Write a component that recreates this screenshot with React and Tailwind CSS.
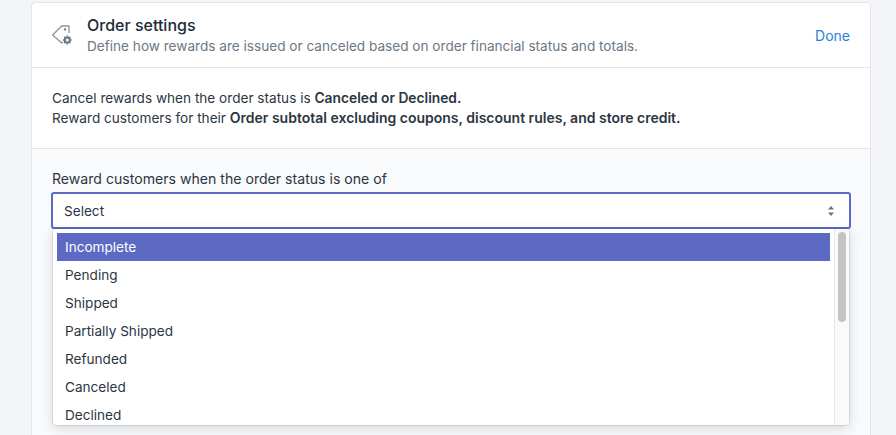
import React from 'react';

const statuses = ['Pending', 'Shipped', 'Partially Shipped', 'Refunded', 'Canceled', 'Declined'];

function TagGearIcon() {
  return (
    <svg width="22" height="22" viewBox="0 0 22 22" fill="none" className="mt-[21px] shrink-0 self-start">
      <path d="M18 9V2H10.7L1.6 11L10.7 19L12 17.8" stroke="#8a94a0" strokeWidth="1.3" strokeLinejoin="round" />
      <circle cx="14" cy="5.4" r="1.2" fill="#6d7885" />
      <circle cx="16.3" cy="16" r="2.5" stroke="#6d7885" strokeWidth="2" />
      <path d="M16.3 11.6v1.8M16.3 18.6v1.8M11.9 16h1.8M18.9 16h1.8M13.2 12.9l1.2 1.2M18.2 17.9l1.2 1.2M19.4 12.9l-1.2 1.2M14.4 17.9l-1.2 1.2" stroke="#6d7885" strokeWidth="1.5" />
    </svg>
  );
}

export default function App() {
  return (
    <div className="h-[435px] overflow-hidden bg-[#f4f5f8] pl-[31px] pr-[25px] pt-[2px] font-['Inter',sans-serif]">
      <div className="h-[460px] rounded-t-[4px] border border-[#e3e5e9] bg-white">
        <div className="flex h-[65px] items-center border-b border-[#e3e5e9] pl-[19px] pr-[20px]">
          <TagGearIcon />
          <div className="ml-[14px] flex-1 self-start pt-[12px]">
            <h2 className="text-[16px] leading-[20px] font-medium text-[#212b36]">Order settings</h2>
            <p className="mt-[2px] text-[13.6px] leading-[18px] text-[#6b7885]">
              Define how rewards are issued or canceled based on order financial status and totals.
            </p>
          </div>
          <a className="text-[14px] font-normal text-[#2b7fd3]">Done</a>
        </div>

        <div className="h-[81px] border-b border-[#e3e5e9] px-[20px] pt-[20px] text-[13.6px] leading-[20px] text-[#2c3642]">
          <p>Cancel rewards when the order status is <b className="text-[13.8px] font-semibold">Canceled or Declined.</b></p>
          <p>Reward customers for their <b className="text-[14px] font-semibold">Order subtotal excluding coupons, discount rules, and store credit.</b></p>
        </div>

        <div className="h-full bg-[#f9fafb] px-[20px] pt-[20px]">
          <label className="block text-[14.1px] leading-[20px] text-[#2c3642]">Reward customers when the order status is one of</label>
          <div className="relative -mx-[1px] mt-[3px]">
            <div className="flex h-[37px] items-center justify-between rounded-[3px] border-2 border-[#5c6ac4] bg-white pl-[11px] pr-[14px] pt-[1px] text-[13.6px] text-[#2c3642]">
              <span>Select</span>
              <svg width="8" height="12" viewBox="0 0 8 12" fill="#637381">
                <path d="M4 1L7 4.6H1Z" />
                <path d="M4 11L1 7.4H7Z" />
              </svg>
            </div>
            <div className="absolute left-[2px] right-[2px] top-[37px] flex h-[196px] overflow-hidden rounded-b-[4px] bg-white shadow-[0_0_0_1px_rgba(33,43,54,0.1),0_3px_12px_rgba(33,43,54,0.18)]">
              <ul className="flex-1 px-[4px] pt-[4px] text-[13.6px] text-[#2c3642]">
                <li className="flex h-[28px] items-center bg-[#5c6ac4] pl-[8px] pt-[1px] text-white">Incomplete</li>
                {statuses.map((status) => (
                  <li key={status} className="flex h-[28px] items-center pl-[8px] pt-[1px]">{status}</li>
                ))}
              </ul>
              <div className="w-[15px] border-l border-[#e8e8e8] bg-[#fafafa] pl-[3px] pt-[3px]">
                <div className="h-[90px] w-[8px] rounded-full bg-[#c4c4c4]" />
              </div>
            </div>
          </div>
        </div>
      </div>
    </div>
  );
}
